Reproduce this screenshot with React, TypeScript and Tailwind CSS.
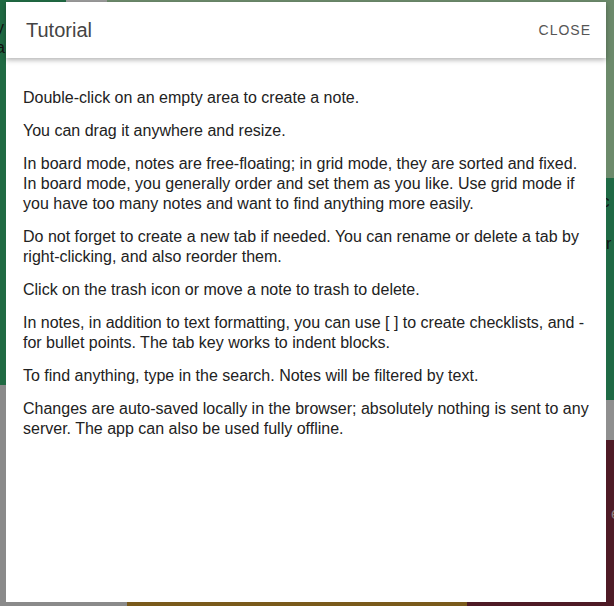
import React from "react";

const paras = [
  "Double-click on an empty area to create a note.",
  "You can drag it anywhere and resize.",
  "In board mode, notes are free-floating; in grid mode, they are sorted and fixed. In board mode, you generally order and set them as you like. Use grid mode if you have too many notes and want to find anything more easily.",
  "Do not forget to create a new tab if needed. You can rename or delete a tab by right-clicking, and also reorder them.",
  "Click on the trash icon or move a note to trash to delete.",
  "In notes, in addition to text formatting, you can use [ ] to create checklists, and - for bullet points. The tab key works to indent blocks.",
  "To find anything, type in the search. Notes will be filtered by text.",
  "Changes are auto-saved locally in the browser; absolutely nothing is sent to any server. The app can also be used fully offline.",
];

export default function App() {
  return (
    <div className="relative w-[614px] h-[606px] overflow-hidden bg-[#8a8a8a]" style={{ fontFamily: '"Liberation Sans", Arial, sans-serif' }}>
      {/* background notes (dimmed) */}
      <div className="absolute left-0 top-0 w-[66px] h-[385px] bg-[#206a43] text-[16px] text-[#111] pt-[18px] leading-[20px]">
        <div className="-ml-[4px]">y</div>
        <div className="-ml-[4px]">a</div>
      </div>
      <div className="absolute left-[66px] top-0 w-[41px] h-[20px] bg-[#9b9b9b]" />
      <div className="absolute left-[107px] top-0 w-[507px] h-[178px] bg-[#6c8a6b]" />
      <div className="absolute left-[440px] top-[178px] w-[174px] h-[222px] bg-[#206a45] text-[16px] text-[#111] leading-[20px] pl-[158px] pt-[14px]">
        <div>ic</div>
        <div className="mt-[22px]">l r</div>
      </div>
      <div className="absolute left-[440px] top-[400px] w-[174px] h-[40px] bg-[#8f8f8f]" />
      <div className="absolute left-[467px] top-[440px] w-[147px] h-[166px] bg-[#4e1a25] text-[16px] text-[#8a7a7d] pl-[144px] pt-[62px]">es</div>
      <div className="absolute left-[127px] top-[560px] w-[340px] h-[46px] bg-[#7a5a1b]" />

      {/* dialog */}
      <div className="absolute left-[6px] top-[2px] w-[600px] h-[600px] bg-white flex flex-col">
        <div className="h-[56px] shrink-0 flex items-center justify-between pl-[20px] pr-[15px] shadow-[0_2px_5px_rgba(0,0,0,0.3)] relative z-10">
          <span className="text-[20px] text-[#444]">Tutorial</span>
          <span className="text-[14px] tracking-[1px] text-[#555]">CLOSE</span>
        </div>
        <div className="px-[17px] pt-[30px] text-[16px] leading-[20px] text-[#222] flex flex-col gap-[13px]">
          {paras.map((p, i) => (
            <p key={i}>{p}</p>
          ))}
        </div>
      </div>
    </div>
  );
}
